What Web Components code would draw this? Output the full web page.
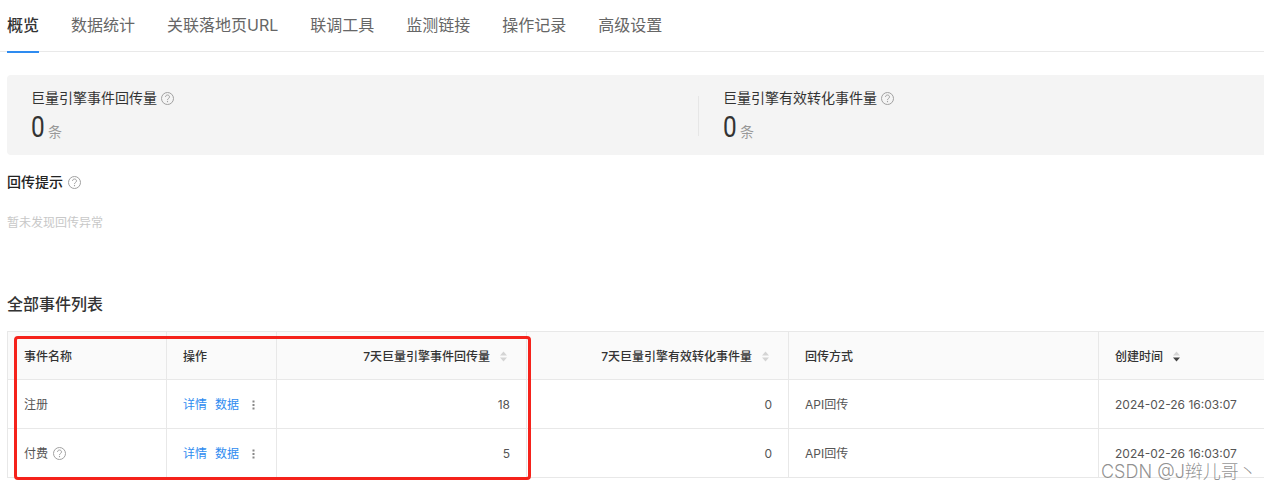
<!DOCTYPE html>
<html lang="zh">
<head>
<meta charset="utf-8">
<title>概览</title>
<style>
  html, body { margin: 0; height: 100%; overflow: hidden; background: #fff; }
  body { font-family: Inter, "Noto Sans CJK SC", sans-serif; color: #333; }
</style>
</head>
<body>
<event-page></event-page>

<script>
const CJK = 'Inter, "Noto Sans CJK SC", sans-serif';

class HelpIcon extends HTMLElement {
  constructor() {
    super();
    this.attachShadow({ mode: 'open' }).innerHTML = `
      <style>
        :host { display: inline-flex; width: 13px; height: 13px; color: #a0a0a0; }
        svg { width: 100%; height: 100%; display: block; }
      </style>
      <svg viewBox="0 0 13 13" fill="none" stroke="currentColor">
        <circle cx="6.5" cy="6.5" r="6" stroke-width="1"/>
        <path d="M4.5 5C4.5 3.8 5.4 3 6.5 3s2 .8 2 1.9c0 1.6-2 1.5-2 3.2" stroke-width="1"/>
        <path d="M6.5 9v1.2" stroke-width="1.1"/>
      </svg>`;
  }
}
customElements.define('help-icon', HelpIcon);

class SortCaret extends HTMLElement {
  constructor() {
    super();
    const active = this.getAttribute('active');
    this.attachShadow({ mode: 'open' }).innerHTML = `
      <style>
        :host { display: inline-flex; width: 7px; height: 11px; }
        svg { width: 100%; height: 100%; display: block; }
      </style>
      <svg viewBox="0 0 7 11">
        <path d="M3.5 0.5 7 4.5H0z" fill="#d4d4d4"/>
        <path d="M0 6.5h7l-3.5 4z" fill="${active === 'down' ? '#444' : '#d4d4d4'}"/>
      </svg>`;
  }
}
customElements.define('sort-caret', SortCaret);

class TabBar extends HTMLElement {
  constructor() {
    super();
    const tabs = ['概览', '数据统计', '关联落地页URL', '联调工具', '监测链接', '操作记录', '高级设置'];
    this.attachShadow({ mode: 'open' }).innerHTML = `
      <style>
        :host { display: flex; gap: 32px; height: 51px; padding-left: 7px; border-bottom: 1px solid #e9e9e9; font: 16px/50px ${CJK}; color: #666; }
        .tab { position: relative; white-space: nowrap; }
        .tab.active { color: #333; font-weight: 500; }
        .tab.active::after { content: ""; position: absolute; left: 0; right: 0; bottom: -2px; height: 2px; background: #2e8bf0; }
      </style>
      ${tabs.map((t, i) => `<div class="tab${i === 0 ? ' active' : ''}">${t}</div>`).join('')}`;
  }
}
customElements.define('tab-bar', TabBar);

class StatItem extends HTMLElement {
  constructor() {
    super();
    this.attachShadow({ mode: 'open' }).innerHTML = `
      <style>
        :host { display: block; }
        .label { display: flex; align-items: center; gap: 4px; height: 20px; font-size: 14px; line-height: 20px; color: #333; }
        .value { display: flex; align-items: baseline; margin-top: 3px; height: 32px; line-height: 32px; }
        .num { font-family: Roboto, sans-serif; font-size: 29px; color: #333; display: inline-block; width: 13px; transform: scaleX(.84); transform-origin: left center; }
        .unit { font-size: 14px; color: #999; margin-left: 4px; }
      </style>
      <div class="label"><slot name="label"></slot><help-icon></help-icon></div>
      <div class="value"><span class="num"><slot name="value"></slot></span><span class="unit"><slot name="unit"></slot></span></div>`;
  }
}
customElements.define('stat-item', StatItem);

class StatCard extends HTMLElement {
  constructor() {
    super();
    this.attachShadow({ mode: 'open' }).innerHTML = `
      <style>
        :host { display: grid; grid-template-columns: 691px 1fr; height: 80px; box-sizing: border-box; margin: 23px 0 0 7px; padding: 13px 0 0; background: #f4f4f4; border-radius: 4px 0 0 4px; }
        ::slotted(:first-child) { padding-left: 24px; }
        ::slotted(:last-child) { padding-left: 25px; position: relative; }
      </style>
      <slot></slot>`;
  }
}
customElements.define('stat-card', StatCard);

class HintBlock extends HTMLElement {
  constructor() {
    super();
    this.attachShadow({ mode: 'open' }).innerHTML = `
      <style>
        :host { display: block; padding: 17px 0 0 7px; }
        .title { display: flex; align-items: center; gap: 5px; height: 20px; font-size: 14px; line-height: 20px; font-weight: 500; color: #222; }
        .empty { margin-top: 22px; font-size: 12px; line-height: 17px; color: #c8c8c8; }
      </style>
      <div class="title"><slot name="title"></slot><help-icon></help-icon></div>
      <div class="empty"><slot name="empty"></slot></div>`;
  }
}
customElements.define('hint-block', HintBlock);

class EventTable extends HTMLElement {
  constructor() {
    super();
    const rows = [
      { name: '注册', help: false, sent: 18, valid: 0, way: 'API回传', time: '2024-02-26 16:03:07' },
      { name: '付费', help: true, sent: 5, valid: 0, way: 'API回传', time: '2024-02-26 16:03:07' },
    ];
    const actions = `<span class="ops"><a>详情</a><a>数据</a><svg width="3" height="10" viewBox="0 0 3 10" fill="#888"><rect x="0.5" y="0.5" width="2" height="2"/><rect x="0.5" y="4" width="2" height="2"/><rect x="0.5" y="7.5" width="2" height="2"/></svg></span>`;
    this.attachShadow({ mode: 'open' }).innerHTML = `
      <style>
        :host { display: block; margin: 2px 0 0 7px; border-top: 1px solid #e8e8e8; border-left: 1px solid #e8e8e8; font: 12px/17px ${CJK}; color: #555; }
        .row { display: grid; grid-template-columns: 159px 110px 250px 262px 310px 1fr; height: 49px; box-sizing: border-box; border-bottom: 1px solid #e8e8e8; }
        .row.head { height: 48px; background: #fafafa; color: #333; font-weight: 500; }
        .cell { display: flex; align-items: center; padding: 1px 16px 0; border-right: 1px solid #e8e8e8; white-space: nowrap; min-width: 0; }
        .row.head .cell { padding-top: 2px; }
        .cell:last-child { border-right: 0; }
        .num { justify-content: flex-end; }
        .sort { gap: 10px; padding-right: 19px; }
        .sort-left { gap: 10px; }
        .name { gap: 5px; }
        .ops { display: flex; align-items: center; gap: 8px; }
        .ops a { color: #2e8bf0; }
        .ops svg { margin-left: 5px; }
      </style>
      <div class="row head">
        <div class="cell">事件名称</div>
        <div class="cell">操作</div>
        <div class="cell num sort">7天巨量引擎事件回传量<sort-caret></sort-caret></div>
        <div class="cell num sort">7天巨量引擎有效转化事件量<sort-caret></sort-caret></div>
        <div class="cell">回传方式</div>
        <div class="cell sort-left">创建时间<sort-caret active="down"></sort-caret></div>
      </div>
      ${rows.map((r) => `
        <div class="row">
          <div class="cell name">${r.name}${r.help ? '<help-icon></help-icon>' : ''}</div>
          <div class="cell">${actions}</div>
          <div class="cell num">${r.sent}</div>
          <div class="cell num">${r.valid}</div>
          <div class="cell">${r.way}</div>
          <div class="cell">${r.time}</div>
        </div>`).join('')}`;
  }
}
customElements.define('event-table', EventTable);

class EventPage extends HTMLElement {
  constructor() {
    super();
    this.attachShadow({ mode: 'open' }).innerHTML = `
      <style>
        :host { display: block; position: relative; height: 491px; overflow: hidden; font-family: ${CJK}; }
        h2 { margin: 0; padding: 62px 0 0 7px; font-size: 16px; line-height: 22px; font-weight: 500; color: #333; height: 36px; }
        .divider { position: absolute; left: 698px; top: 96px; width: 1px; height: 40px; background: #e6e6e6; }
        .mark { position: absolute; left: 14px; top: 336px; width: 517px; height: 144px; box-sizing: border-box; border: 3px solid #f5221b; border-radius: 4px; }
        .watermark { position: absolute; left: 1101px; top: 461px; font-size: 18px; font-weight: 300; line-height: 22px; color: rgba(110, 110, 110, .75); white-space: nowrap; }
      </style>
      <tab-bar></tab-bar>
      <stat-card>
        <stat-item><span slot="label">巨量引擎事件回传量</span><span slot="value">0</span><span slot="unit">条</span></stat-item>
        <stat-item><span slot="label">巨量引擎有效转化事件量</span><span slot="value">0</span><span slot="unit">条</span></stat-item>
      </stat-card>
      <hint-block><span slot="title">回传提示</span><span slot="empty">暂未发现回传异常</span></hint-block>
      <h2>全部事件列表</h2>
      <event-table></event-table>
      <div class="divider"></div>
      <div class="mark"></div>
      <div class="watermark">CSDN @J辫儿哥丶</div>`;
  }
}
customElements.define('event-page', EventPage);
</script>
</body>
</html>
